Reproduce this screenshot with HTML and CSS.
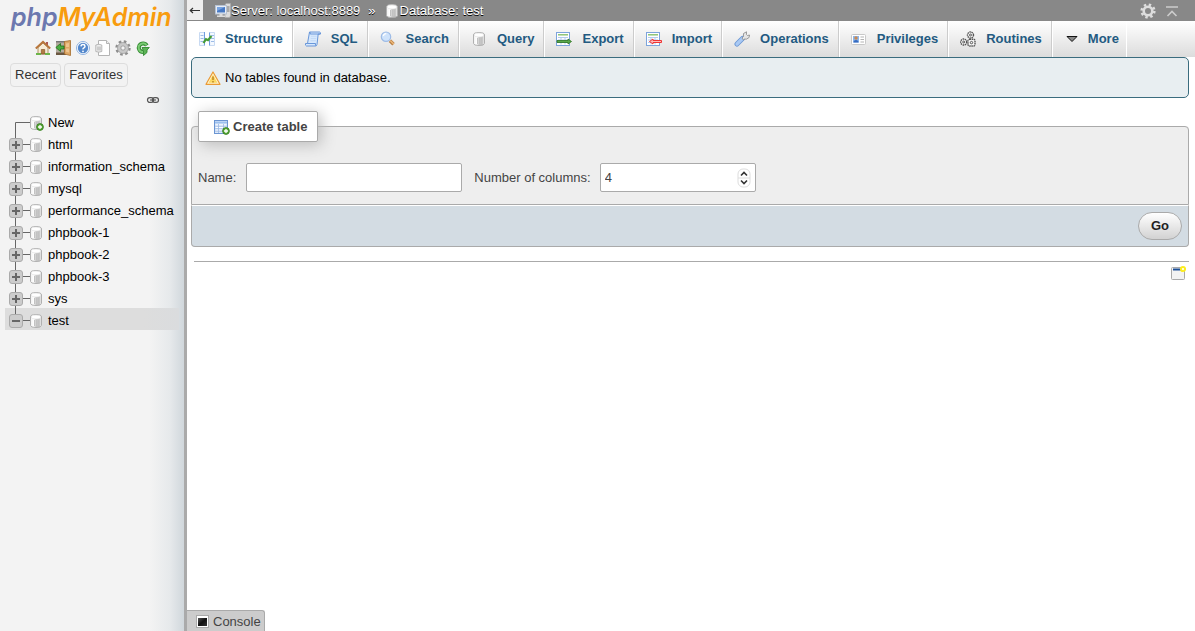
FILE: index.html
```html
<!DOCTYPE html>
<html lang="en">
<head>
<meta charset="utf-8">
<title>phpMyAdmin - test</title>
<link rel="stylesheet" href="styles.css">
</head>
<body>
<svg class="sprite" width="0" height="0" aria-hidden="true">
  <defs>
    <linearGradient id="g-db"><stop offset="0" stop-color="#f0f0f0"/><stop offset=".3" stop-color="#fff"/><stop offset=".5" stop-color="#c8c8c8"/><stop offset=".8" stop-color="#c4c4c4"/><stop offset="1" stop-color="#f6f6f6"/></linearGradient>
    <linearGradient id="g-dark" x2="1" y2="1"><stop offset="0" stop-color="#555"/><stop offset=".5" stop-color="#111"/><stop offset="1" stop-color="#333"/></linearGradient>
  </defs>
  <symbol id="i-db" viewBox="0 0 16 16">
    <path d="M2.500 4v8.500q0 2 5.500 2t5.500-2V4q0-2.500-5.500-2.500T2.500 4z" fill="url(#g-db)" stroke="#b0b0b0"/>
    <ellipse cx="8" cy="4" rx="4.800" ry="2" fill="#fff" stroke="#ddd" stroke-width=".6"/>
    <path d="M6.500 7v6M8.500 7v6M10.500 7v6" stroke="#c2c2c2" stroke-width="1"/>
  </symbol>
  <symbol id="i-add" viewBox="0 0 8 8"><circle cx="4" cy="4" r="3.400" fill="#5aa83a" stroke="#2f7a18" stroke-width=".8"/><path d="M4 2v4M2 4h4" stroke="#fff" stroke-width="1.300"/></symbol>
  <symbol id="i-plus" viewBox="0 0 14 14"><rect x=".5" y=".5" width="13" height="13" rx="2.500" fill="#ccc" stroke="#aaa"/><path d="M7 3v8M3 7h8" stroke="#666" stroke-width="2"/></symbol>
  <symbol id="i-minus" viewBox="0 0 14 14"><rect x=".5" y=".5" width="13" height="13" rx="2.500" fill="#ccc" stroke="#aaa"/><path d="M3 7h8" stroke="#666" stroke-width="2"/></symbol>
  <symbol id="b-plus" viewBox="0 0 25 22"><path d="M10.500 0v22M10.500 12.500H25" stroke="#666"/><use href="#i-plus" x="4" y="6" width="14" height="14"/></symbol>
  <symbol id="i-home" viewBox="0 0 16 16">
    <path d="M11 2h2v4h-2z" fill="#a55"/><path d="M3 7.500 8 3l5 4.500V14H3z" fill="#f7ecd6" stroke="#9c7a48" stroke-width=".8"/><path d="M.8 8.500 8 1.800l7.200 6.700" fill="none" stroke="#b8763c" stroke-width="2"/><path d="M6.300 14V9.500h3.400V14z" fill="#b27b42" stroke="#7a4c20" stroke-width=".6"/><path d="M1 14h5M10 14h5" stroke="#6db54a" stroke-width="2.200"/>
  </symbol>
  <symbol id="i-exit" viewBox="0 0 16 16">
    <path d="M1 1h9v12H1z" fill="#b4aba0"/><path d="M1 1h9v1.500H1z" fill="#777"/><path d="M1 12.500h10V15H1z" fill="#6b5741"/><path d="m9.500 1.500 6-1v15l-6-1.500z" fill="#dca766" stroke="#a66c2b" stroke-width=".8"/><path d="m11 3.500 3-.6v4l-3 .2zM11 8.500l3 .1v4l-3-.8z" fill="#eec48e"/><path d="M.8 7.500 5.500 3.500V6H9v3H5.500v2.500z" fill="#4cad42" stroke="#1f701a" stroke-width=".8"/>
  </symbol>
  <symbol id="i-help" viewBox="0 0 16 16"><circle cx="8" cy="8" r="6.500" fill="#fff" stroke="#8fb2e0" stroke-width="1"/><circle cx="8" cy="8" r="5.200" fill="#5488cc"/><path d="M6 6.400q.1-1.900 2-1.900t2 1.700q0 1-1.100 1.600T8 9.400" fill="none" stroke="#fff" stroke-width="1.500"/><circle cx="8" cy="11.300" r=".9" fill="#fff"/></symbol>
  <symbol id="i-doc" viewBox="0 0 16 16"><path d="M3.500.5h8l3 3v12h-11z" fill="#fff" stroke="#b4b4b4"/><path d="M11.500.5v3h3" fill="#eee" stroke="#b4b4b4"/><path d="M.8 5q3-1.500 6 0v6.500q-3 1.300-6 0z" fill="#eee" stroke="#aaa" stroke-width=".8"/><path d="M3 6.500v4M5 6.500v4" stroke="#aaa"/></symbol>
  <symbol id="i-gear" viewBox="0 0 16 16"><circle cx="8" cy="8" r="6.500" fill="none" stroke="#8d8d8d" stroke-width="2.400" stroke-dasharray="2.600 2.505"/><circle cx="8" cy="8" r="4" fill="none" stroke="#c8c8c8" stroke-width="3.200"/><circle cx="8" cy="8" r="5.500" fill="none" stroke="#999" stroke-width=".7"/><circle cx="8" cy="8" r="2.200" fill="#f3f3f3" stroke="#888" stroke-width=".8"/></symbol>
  <symbol id="i-gear-light" viewBox="0 0 16 16"><circle cx="8" cy="8" r="6.300" fill="none" stroke="#ddd" stroke-width="2.600" stroke-dasharray="2.400 2.548"/><circle cx="8" cy="8" r="4.300" fill="none" stroke="#ddd" stroke-width="2.600"/></symbol>
  <symbol id="i-reload" viewBox="0 0 16 16"><path d="M11.800 5.500A4.300 4.300 0 1 0 8 12" fill="none" stroke="#338a32" stroke-width="4"/><path d="M11.500 5.200A4.300 4.300 0 1 0 8.500 12" fill="none" stroke="#7bcb74" stroke-width="2"/><path d="M7 7.500h7.300L12 10v2.500L8.500 15.500V11z" fill="#5cb356" stroke="#338a32" stroke-width=".9"/></symbol>
  <symbol id="i-link" viewBox="0 0 16 10"><rect x="1.700" y="2.200" width="7" height="5.600" rx="2.800" fill="none" stroke="#555" stroke-width="1.400"/><rect x="7.300" y="2.200" width="7" height="5.600" rx="2.800" fill="none" stroke="#555" stroke-width="1.400"/><path d="M4.500 5h7" stroke="#555" stroke-width="1.300"/></symbol>
  <symbol id="i-server" viewBox="0 0 16 16"><path d="m10 2 1-1.500h4.500V13l-1 1.500H10z" fill="#ddd" stroke="#aaa" stroke-width=".7"/><path d="M12 4h2.500M12 6h2.500M12 8h2.500" stroke="#777"/><rect x=".5" y="2.500" width="11" height="8.500" fill="#e8edf5" stroke="#b7c2d2"/><rect x="2" y="4" width="8" height="5.500" fill="#4779c4"/><path d="M2 4h8L2 8z" fill="#7aa4e0"/><path d="M4.500 11h3v1.500H10V14H2v-1.500h2.500z" fill="#ddd"/></symbol>
  <symbol id="i-structure" viewBox="0 0 16 16"><path d="M.5 1.500h4.800v13H.5zM10.700 1.500h4.800v13h-4.800z" fill="#f4f9ff" stroke="#c8daf2"/><path d="M5.500 1v13.500M10.500 1.500v13" stroke="#6f9ddf"/><path d="M1.500 4.500h3M1.500 7.500h3M1.500 10.500h3M12 4.500h3M12 7.500h3M12 10.500h3" stroke="#9dbbe6"/><path d="M4.500 12 7 8.200l2 1L12.500 5" fill="none" stroke="#459c36" stroke-width="2.200"/></symbol>
  <symbol id="i-sql" viewBox="0 0 16 16"><path d="M4.500 1h10q1.300.2 1 2h-2.300L12 13.500q-.3 1.500-1.500 1.500H1.500q-1.500-.5-1-2.500h2z" fill="#d7e8fc" stroke="#5b8dd6" stroke-width=".9"/><path d="M4.500 1q1 .5.700 2h10M2.500 12.500h8q-.4 2 .5 2.400" fill="none" stroke="#5b8dd6" stroke-width=".9"/><path d="M6 5.300h5.500M5.700 7.500h5.500M5.400 9.700h5.500" stroke="#c3daf7"/></symbol>
  <symbol id="i-search" viewBox="0 0 16 16"><circle cx="6" cy="5.700" r="4.700" fill="#cfe3fb" stroke="#9dbbe6" stroke-width="1.200"/><path d="M3.300 5a3 3 0 0 1 3-2.300" fill="none" stroke="#fff" stroke-width="1.200"/><path d="m10 9.800 3.500 3.500" stroke="#b57b3f" stroke-width="3.400"/><path d="m10.300 9.600 3.500 3.500" stroke="#eab578" stroke-width="1.500"/></symbol>
  <symbol id="i-table" viewBox="0 0 16 16"><rect x=".5" y="1.500" width="13" height="13" fill="#fff" stroke="#7da4dc"/><path d="M2 3.800h10" stroke="#86c06c" stroke-width="1.400"/><path d="M2 6.500h10M2 9h10M2 11.500h10M5 6v7.500M9 6v7.500" stroke="#b4cbec"/></symbol>
  <symbol id="i-export" viewBox="0 0 16 16"><use href="#i-table"/><path d="M1 9.500h11V8l3.500 2.500L12 13v-1.500H1z" fill="#5ba94a" stroke="#2b7220" stroke-width=".8"/></symbol>
  <symbol id="i-import" viewBox="0 0 16 16"><use href="#i-table"/><path d="M15.500 9.500H7V8l-3.500 2.500L7 13v-1.500h8.500z" fill="#fbb" stroke="#e33" stroke-width="1"/></symbol>
  <symbol id="i-create" viewBox="0 0 16 16"><rect x=".5" y="1.500" width="13" height="13" fill="#dfeafa" stroke="#6b95d2"/><path d="M1 3.500h12" stroke="#9cc0ee" stroke-width="2"/><path d="M2 6h10M2 8.500h10M2 11h10" stroke="#fff" stroke-width="1.200"/><path d="M4.500 5v9M9.500 5v9M1 7.200h12M1 9.700h12M1 12.200h12" stroke="#9bb9e4" stroke-width=".8"/><use href="#i-add" x="8" y="8" width="8" height="8"/></symbol>
  <symbol id="i-wrench" viewBox="0 0 16 16"><path d="m3 13 5.500-5.500" stroke="#6c97d4" stroke-width="5" stroke-linecap="round"/><path d="m3 13 5.500-5.500" stroke="#a9c9f4" stroke-width="3.200" stroke-linecap="round"/><path d="m8 7 1.500-1.500V2.500L12.500.8v2.700l1 1 2-.5-.4 2.500-2.600 1.600h-2L9.500 9z" fill="#e4e4e4" stroke="#888" stroke-width=".8"/></symbol>
  <symbol id="i-card" viewBox="0 0 16 16"><rect x=".5" y="3.500" width="14" height="10" rx="1" fill="#fff" stroke="#c8c8c8"/><rect x="2" y="5" width="6" height="6.500" fill="#8cb6ec"/><circle cx="5" cy="7" r="1.700" fill="#c98a52"/><path d="M2.500 11.500q0-2.500 2.500-2.500t2.500 2.500z" fill="#376bc0"/><path d="M9.500 6H13M9.500 8.500H13M9.500 11H13" stroke="#aaa" stroke-width=".9"/></symbol>
  <symbol id="i-routines" viewBox="0 0 16 16"><g fill="#f5f5f5" stroke="#555" stroke-width="1"><circle cx="10.500" cy="4" r="3" stroke-width="1.400" stroke-dasharray="1.500 .6"/><circle cx="3.700" cy="11" r="3" stroke-width="1.400" stroke-dasharray="1.500 .6"/><rect x="8" y="8.300" width="7" height="6.700" rx="1.500" stroke-width="1.400" stroke-dasharray="1.500 .6"/><circle cx="10.500" cy="4" r="1"/><circle cx="3.700" cy="11" r="1"/><circle cx="11.500" cy="11.600" r="1.200"/></g></symbol>
  <symbol id="i-more" viewBox="0 0 16 16"><path d="M3 5.500h10L8 10.500z" fill="#888" stroke="#111" stroke-width="1"/></symbol>
  <symbol id="i-warn" viewBox="0 0 16 16"><path d="M8 2 15 14.300H1z" fill="#fff4cf" stroke="#ea9a35" stroke-width="1.200" stroke-linejoin="round"/><path d="m8 4.800 4.400 8H3.600z" fill="#fcd85f"/><path d="M8 6.500v3.500M8 11v1.500" stroke="#c08a2a" stroke-width="1.600"/></symbol>
  <symbol id="i-window" viewBox="0 0 16 16"><rect x="1.500" y="2.500" width="13" height="12" rx="1" fill="#f3f3f3" stroke="#aaa"/><path d="M3 4.500h8" stroke="#1c4f96" stroke-width="2"/><circle cx="13" cy="4" r="2.100" fill="#fff" stroke="#fced20" stroke-width="2"/></symbol>
</svg>

<nav class="sidebar" aria-label="Navigation">
  <a class="logo" href="#"><span class="logo-php">php</span><span class="logo-my">MyAdmin</span></a>
  <div class="quick">
    <a href="#" aria-label="Home"><svg class="icon"><use href="#i-home"/></svg></a>
    <a href="#" aria-label="Log out"><svg class="icon"><use href="#i-exit"/></svg></a>
    <a href="#" aria-label="Documentation"><svg class="icon"><use href="#i-help"/></svg></a>
    <a href="#" aria-label="SQL documentation"><svg class="icon"><use href="#i-doc"/></svg></a>
    <a href="#" aria-label="Settings"><svg class="icon"><use href="#i-gear"/></svg></a>
    <a href="#" aria-label="Reload"><svg class="icon"><use href="#i-reload"/></svg></a>
  </div>
  <div class="recent">
    <button class="chip" type="button">Recent</button>
    <button class="chip" type="button">Favorites</button>
  </div>
  <div class="unlink"><a href="#" aria-label="Unlink from main panel"><svg class="icon-link"><use href="#i-link"/></svg></a></div>
  <ul class="tree">
    <li class="node"><svg class="branch" viewBox="0 0 25 22"><path d="M10.500 22V12.500H25" fill="none" stroke="#666"/></svg><svg class="icon"><use href="#i-db"/><use href="#i-add" x="8" y="8" width="8" height="8"/></svg><a href="#">New</a></li>
    <li class="node"><button class="toggle" type="button" aria-label="Expand html"><svg class="branch"><use href="#b-plus"/></svg></button><svg class="icon"><use href="#i-db"/></svg><a href="#">html</a></li>
    <li class="node"><button class="toggle" type="button" aria-label="Expand information_schema"><svg class="branch"><use href="#b-plus"/></svg></button><svg class="icon"><use href="#i-db"/></svg><a href="#">information_schema</a></li>
    <li class="node"><button class="toggle" type="button" aria-label="Expand mysql"><svg class="branch"><use href="#b-plus"/></svg></button><svg class="icon"><use href="#i-db"/></svg><a href="#">mysql</a></li>
    <li class="node"><button class="toggle" type="button" aria-label="Expand performance_schema"><svg class="branch"><use href="#b-plus"/></svg></button><svg class="icon"><use href="#i-db"/></svg><a href="#">performance_schema</a></li>
    <li class="node"><button class="toggle" type="button" aria-label="Expand phpbook-1"><svg class="branch"><use href="#b-plus"/></svg></button><svg class="icon"><use href="#i-db"/></svg><a href="#">phpbook-1</a></li>
    <li class="node"><button class="toggle" type="button" aria-label="Expand phpbook-2"><svg class="branch"><use href="#b-plus"/></svg></button><svg class="icon"><use href="#i-db"/></svg><a href="#">phpbook-2</a></li>
    <li class="node"><button class="toggle" type="button" aria-label="Expand phpbook-3"><svg class="branch"><use href="#b-plus"/></svg></button><svg class="icon"><use href="#i-db"/></svg><a href="#">phpbook-3</a></li>
    <li class="node"><button class="toggle" type="button" aria-label="Expand sys"><svg class="branch"><use href="#b-plus"/></svg></button><svg class="icon"><use href="#i-db"/></svg><a href="#">sys</a></li>
    <li class="node node-active"><button class="toggle" type="button" aria-label="Collapse test"><svg class="branch" viewBox="0 0 25 22"><path d="M10.500 0v13M10.500 12.500H25" stroke="#666"/><use href="#i-minus" x="4" y="6" width="14" height="14"/></svg></button><svg class="icon"><use href="#i-db"/></svg><a href="#">test</a></li>
  </ul>
</nav>

<div class="main">
  <header class="crumbs">
    <button class="collapse" type="button" aria-label="Hide panel"><svg width="12" height="9" viewBox="0 0 12 9"><path d="M1 4.500h10M4 2 1.300 4.500 4 7" fill="none" stroke="#333" stroke-width="1.200"/></svg></button>
    <div class="path">
      <svg class="icon"><use href="#i-server"/></svg><a href="#">Server: localhost:8889</a>
      <span class="sep">»</span>
      <svg class="icon"><use href="#i-db"/></svg><a href="#">Database: test</a>
    </div>
    <div class="tools">
      <a href="#" aria-label="Page settings"><svg class="icon"><use href="#i-gear-light"/></svg></a>
      <a href="#" aria-label="Scroll to top"><svg class="icon" viewBox="0 0 16 16"><path d="M2 4h12M3.500 13 8 8.500l4.500 4.500" fill="none" stroke="#ccc" stroke-width="1.600"/></svg></a>
    </div>
  </header>
  <nav class="tabs" aria-label="Database">
    <a class="tab tab-active" href="#"><svg class="icon"><use href="#i-structure"/></svg>Structure</a>
    <a class="tab" href="#"><svg class="icon"><use href="#i-sql"/></svg>SQL</a>
    <a class="tab" href="#"><svg class="icon"><use href="#i-search"/></svg>Search</a>
    <a class="tab" href="#"><svg class="icon"><use href="#i-db"/></svg>Query</a>
    <a class="tab" href="#"><svg class="icon"><use href="#i-export"/></svg>Export</a>
    <a class="tab" href="#"><svg class="icon"><use href="#i-import"/></svg>Import</a>
    <a class="tab" href="#"><svg class="icon"><use href="#i-wrench"/></svg>Operations</a>
    <a class="tab" href="#"><svg class="icon"><use href="#i-card"/></svg>Privileges</a>
    <a class="tab" href="#"><svg class="icon"><use href="#i-routines"/></svg>Routines</a>
    <a class="tab tab-more" href="#"><svg class="icon"><use href="#i-more"/></svg>More</a>
  </nav>
  <main class="content">
    <div class="notice"><svg class="icon"><use href="#i-warn"/></svg>No tables found in database.</div>
    <form class="create">
      <fieldset class="fields">
        <legend class="legend"><span class="legend-row"><svg class="icon"><use href="#i-create"/></svg>Create table</span></legend>
        <div class="row">
          <label for="name">Name:</label>
          <input class="text name" id="name" type="text">
          <label class="cols-label" for="cols">Number of columns:</label>
          <span class="number">
            <input class="text" id="cols" type="number" value="4" min="1">
            <svg class="spin" viewBox="0 0 14 20" aria-hidden="true"><rect x="1" y="1" width="12" height="18" rx="5" fill="#fff" stroke="#ddd"/><path d="M1 10h12" stroke="#ddd"/><path d="m4 7.500 3-3 3 3M4 12.500l3 3 3-3" fill="none" stroke="#333" stroke-width="1.600"/></svg>
          </span>
        </div>
      </fieldset>
      <div class="actions"><button class="go" type="submit">Go</button></div>
    </form>
    <div class="foot"><a href="#" aria-label="Open new window"><svg class="icon"><use href="#i-window"/></svg></a></div>
  </main>
  <div class="console"><button class="console-tab" type="button"><svg width="13" height="13" viewBox="0 0 13 13"><rect x=".5" y=".5" width="12" height="12" fill="#fff" stroke="#aaa"/><rect x="2" y="3" width="9" height="8" fill="url(#g-dark)"/></svg>Console</button></div>
</div>
</body>
</html>
```
FILE: styles.css
```css
* { box-sizing: border-box; }

body {
  margin: 0;
  display: flex;
  min-height: 100vh;
  background: #fff;
  color: #444;
  font: 13px/16px "Liberation Sans", Arial, sans-serif;
}

a { color: inherit; text-decoration: none; }
button, input { font: inherit; color: inherit; margin: 0; }
.sprite { position: absolute; }
.icon { display: block; flex: none; width: 16px; height: 16px; }

.sidebar {
  flex: none;
  width: 187px;
  border-right: 3px solid #aaa;
  background: linear-gradient(to left, #d0d7dc, #e6e9eb 14px, #f3f3f3 34px);
  color: #000;
}

.logo {
  display: block;
  padding-left: 11px;
  font: italic 600 25px/34px Inter, "Open Sans", sans-serif;
}
.logo-php { color: #6c78af; }
.logo-my { color: #f89c0e; }

.quick { display: flex; gap: 4px; padding: 6px 0 0 35px; }
.quick a { width: 16px; }

.recent { display: flex; gap: 3px; padding: 7px 0 0 10px; }
.chip {
  height: 24px;
  padding: 0 4px;
  border: 1px solid #ddd;
  border-radius: 4px;
  background: #f2f2f2;
  color: #333;
}

.unlink { display: flex; justify-content: flex-end; padding: 8px 24px 0 0; }
.icon-link { display: block; width: 14px; height: 10px; }

.tree { margin: 0; padding: 5px 5px 0; list-style: none; }
.node { display: flex; align-items: center; height: 22px; }
.node > .icon { margin: 4px 4px 0 -2px; }
.node > a { padding-top: 4px; }
.node-active { background: linear-gradient(to right, #ddd 80%, #dadcde); }
.toggle { padding: 0; border: 0; background: none; }
.branch { display: block; flex: none; width: 25px; height: 22px; }

.main { flex: 1; min-width: 0; display: flex; flex-direction: column; }

.crumbs {
  display: flex;
  align-items: center;
  height: 21px;
  background: #888;
  color: #fff;
  text-shadow: 0 1px 0 #000;
}
.collapse {
  align-self: flex-start;
  display: grid;
  place-items: center;
  width: 16px;
  height: 20px;
  padding: 0;
  border: 0;
  background: #eee;
}
.path { display: flex; align-items: center; padding-left: 12px; }
.sep { padding: 0 8px; }
.tools { display: flex; gap: 8px; margin-left: auto; padding-right: 15px; }

.tabs {
  display: flex;
  height: 36px;
  background: linear-gradient(#fff, #dcdcdc);
}
.tab {
  display: flex;
  align-items: center;
  gap: 10px;
  padding: 0 9px 0 11px;
  border-right: 1px solid #ccc;
  border-left: 1px solid #fff;
  color: #235a81;
  font-weight: bold;
}
.tab-active { background: #fff; }
.tab-more { gap: 8px; padding-right: 7px; border-right-color: #fff; }

.content { padding: 0 6px 0 4px; }

.notice {
  display: flex;
  align-items: center;
  gap: 4px;
  height: 41px;
  padding-left: 13px;
  border: 1px solid #3a6c7e;
  border-radius: 5px;
  background: #e8eef1;
  color: #000;
}

.create { margin-top: 13px; }
.fields {
  min-width: 0;
  margin: 0;
  padding: 21px 6px 12px;
  border: 1px solid #aaa;
  border-radius: 4px 4px 0 0;
  background: #eee;
}
.legend {
  padding: 0 10px 0 15px;
  border: 1px solid #aaa;
  border-radius: 2px;
  background: #fff;
  box-shadow: 3px 3px 15px #bbb;
  font-weight: bold;
}
.legend-row { display: flex; align-items: center; gap: 3px; height: 29px; }
.row { display: flex; align-items: center; flex-wrap: wrap; }
.text {
  height: 29px;
  padding: 0 4px;
  border: 1px solid #aaa;
  border-radius: 2px;
  background: #fff;
}
.name { width: 216px; margin: 0 12px 0 10px; }
.cols-label { margin-right: 9px; }
.number { position: relative; width: 156px; }
.number .text { width: 100%; appearance: textfield; -moz-appearance: textfield; }
.text::-webkit-inner-spin-button { appearance: none; -webkit-appearance: none; }
.spin { position: absolute; top: 5px; right: 5px; width: 14px; height: 20px; }

.actions {
  display: flex;
  justify-content: flex-end;
  padding: 6px;
  border: 1px solid #aaa;
  border-top-color: #fff;
  border-radius: 0 0 4px 4px;
  background: #d3dce3;
}
.go {
  height: 28px;
  padding: 0 12px;
  border: 1px solid #aaa;
  border-radius: 14px;
  background: linear-gradient(#fff, #d2d2d2);
  color: #222;
  font-weight: bold;
}

.foot {
  display: flex;
  justify-content: flex-end;
  margin: 14px 0 0 3px;
  padding: 3px 3px 0 0;
  border-top: 1px solid #aaa;
}

.console { display: flex; margin-top: auto; }
.console-tab {
  display: flex;
  align-items: center;
  gap: 4px;
  height: 21px;
  padding: 1px 3px 0 9px;
  border: 1px solid #aaa;
  border-width: 1px 1px 0 0;
  border-radius: 0 3px 0 0;
  background: #ccc;
}
```
